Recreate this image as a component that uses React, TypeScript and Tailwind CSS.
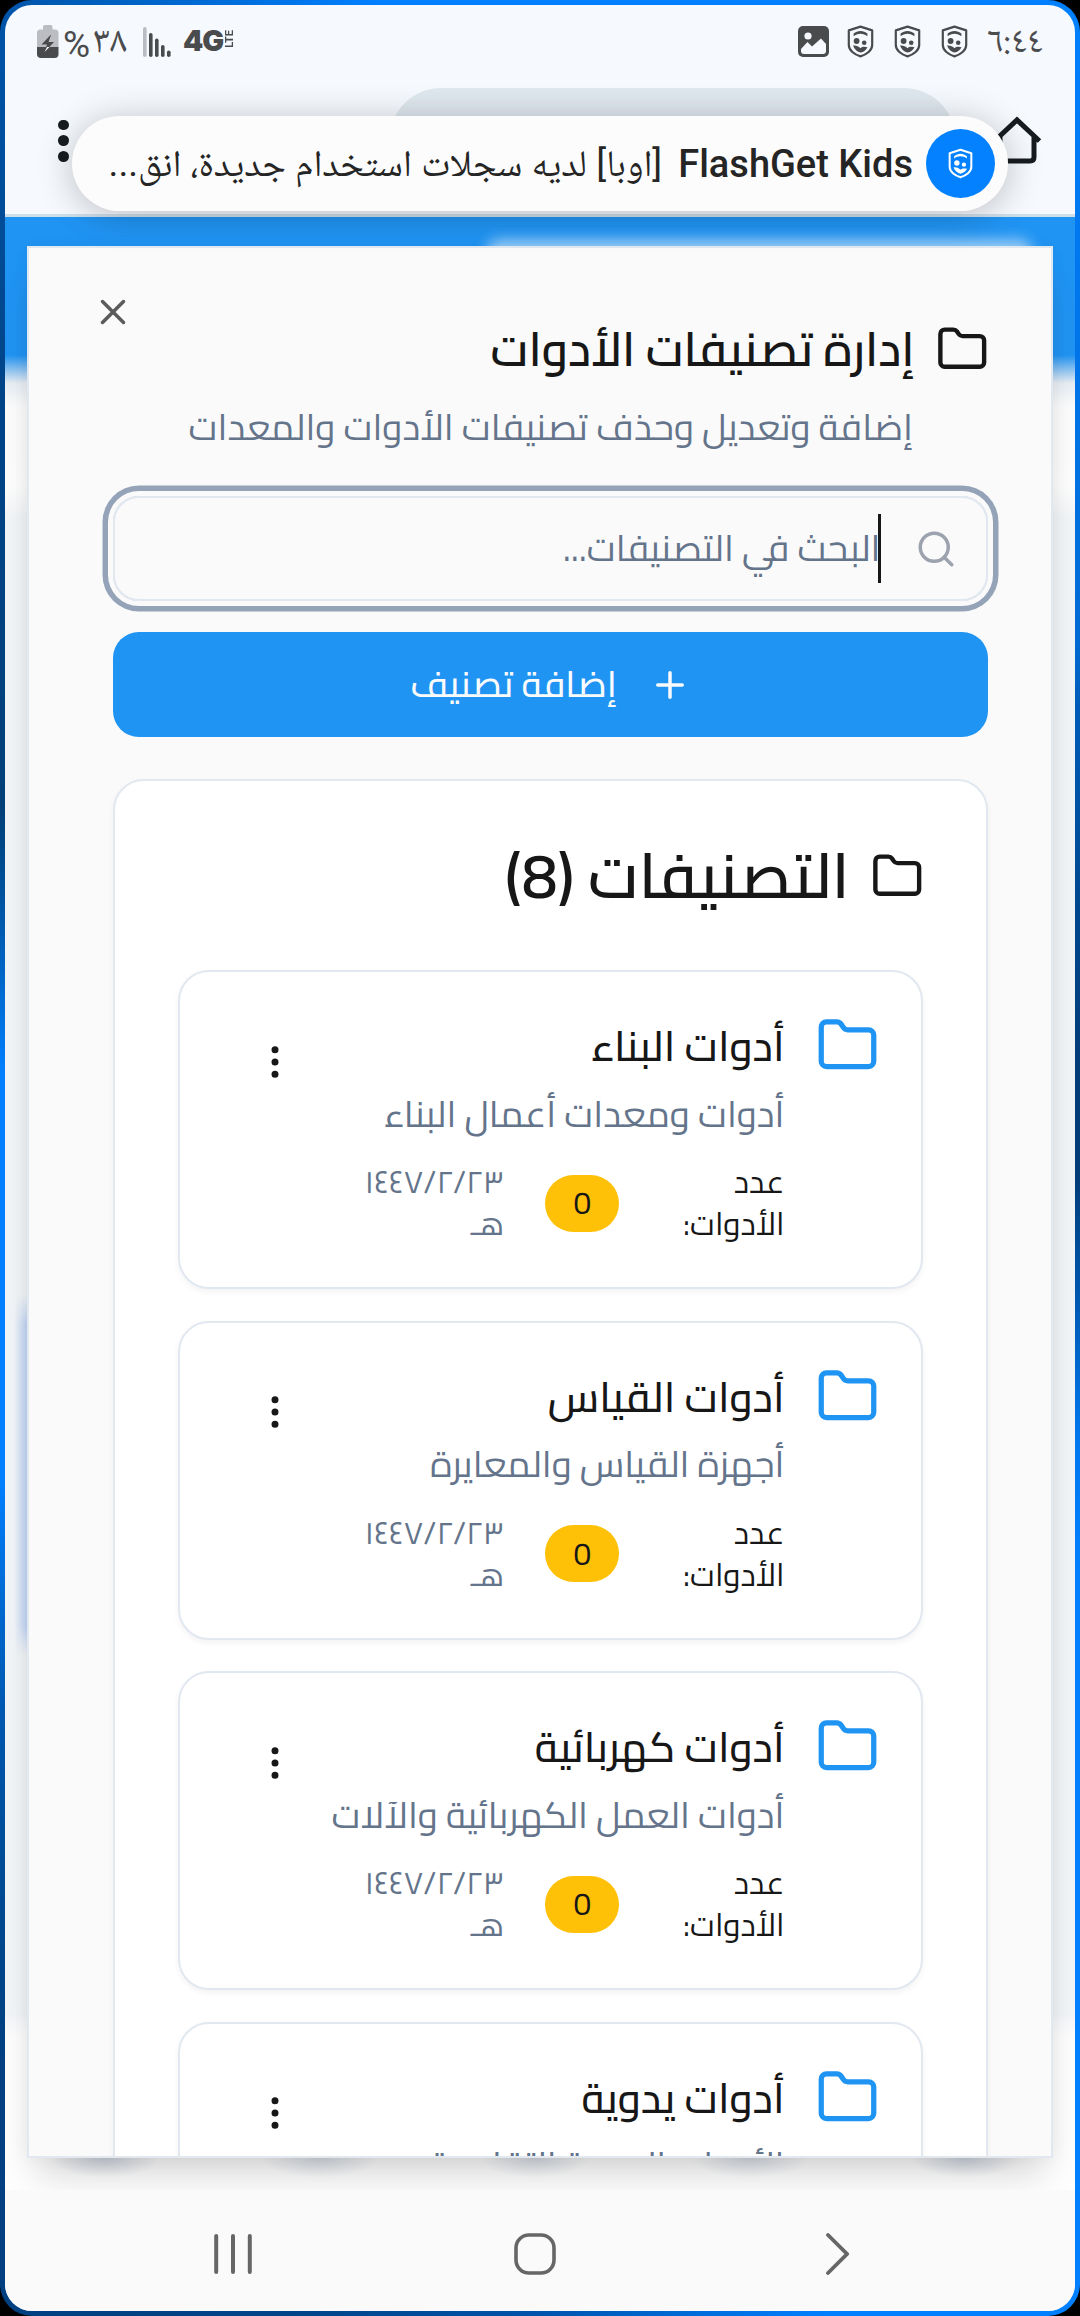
import React from 'react';
import { Folder, Search, Plus, X, MoreVertical } from 'lucide-react';

type Category = { name: string; description: string; count: number };

const categories: Category[] = [
  { name: 'أدوات البناء', description: 'أدوات ومعدات أعمال البناء', count: 0 },
  { name: 'أدوات القياس', description: 'أجهزة القياس والمعايرة', count: 0 },
  { name: 'أدوات كهربائية', description: 'أدوات العمل الكهربائية والآلات', count: 0 },
  { name: 'أدوات يدوية', description: 'الأدوات اليدوية التقليدية', count: 0 },
];

function Shield({ className }: { className: string }) {
  return (
    <svg viewBox="0 0 27 33" className={className} fill="none">
      <path
        d="M13.500 1.600 25.200 5.400V20c0 5.400-5.600 9.600-11.700 11.400C7.400 29.600 1.800 25.400 1.800 20V5.400Z"
        stroke="currentColor"
        strokeWidth="2.2"
        strokeLinejoin="round"
      />
      <path d="M6.600 11.200V8.600c2-1.600 4.200-2.600 6.900-2.600s4.900 1 6.900 2.600v2.600c-2-1.500-4.200-2.400-6.900-2.400s-4.900.9-6.900 2.400Z" fill="currentColor" />
      <circle cx="9.600" cy="16" r="2.900" fill="currentColor" />
      <circle cx="17.200" cy="17.800" r="2.300" fill="currentColor" />
      <path d="M6 20.600c2.600-.5 5.200.2 7.500 2.600 1.600-1.600 4.500-1.700 7-.9-1 2.600-4 4.800-7 5.300-3.200-.7-6.300-3.200-7.500-7Z" fill="currentColor" />
    </svg>
  );
}

function StatusBar() {
  return (
    <div dir="ltr" className="flex h-[83px] items-start justify-between pl-[32px] pr-[32px] pt-[20px] text-[#4a4b4d]">
      <div className="flex items-start">
        <svg viewBox="0 0 22 33" className="h-[33px] w-[22px]">
          <path d="M6 3.500V2Q6 0 8 0h5.500q2 0 2 2v2.500H18q3.500 0 3.500 3.500V22H0V8q0-3.500 3.500-3.500H6Z" fill="#bbbdc2" />
          <path d="M0 22h21.500v7q0 4-4 4H4q-4 0-4-4Z" fill="#4a4b4d" />
          <path d="m13.500 10-9 9.500h5.500L7.500 27l9.500-10h-5.500L14 10Z" fill="#4a4b4d" />
          <path d="m10 22-2.500 5 5-5Z" fill="#f6f9fe" />
        </svg>
        <span className="ml-[4px] w-[28px] font-['Roboto'] text-[37px] leading-[39px]">%</span>
        <span className="ml-[2px] w-[38px] whitespace-nowrap font-['Noto_Naskh_Arabic','Noto_Sans_Arabic',serif] text-[38px] leading-[38px]">٣٨</span>
        <svg viewBox="0 0 28 30" className="ml-[12px] mt-[1.500px] h-[30px] w-[28px]">
          <rect x="0" y="0" width="3.600" height="30" rx="1.800" fill="#bbbdc2" />
          <rect x="6" y="6" width="3.600" height="24" rx="1.800" fill="#4a4b4d" />
          <rect x="12" y="11.500" width="3.600" height="18.500" rx="1.800" fill="#4a4b4d" />
          <rect x="18" y="18" width="3.600" height="12" rx="1.800" fill="#4a4b4d" />
          <rect x="24" y="23.500" width="3.600" height="6.500" rx="1.800" fill="#4a4b4d" />
        </svg>
        <span className="ml-[12px] mt-[5px] w-[42px] whitespace-nowrap font-['Inter'] text-[29px] font-black leading-[22px] tracking-[-1px]">4G</span>
        <span className="mt-[5px] rotate-180 font-['Roboto'] text-[11px] font-bold leading-[10px] [writing-mode:vertical-rl]">LTE</span>
      </div>
      <div className="flex items-start">
        <svg viewBox="0 0 31 31" className="mt-px h-[31px] w-[31px]">
          <rect width="31" height="31" rx="5" fill="#4a4b4d" />
          <circle cx="10" cy="10" r="3.600" fill="#f6f9fe" />
          <path d="M3 23 9.500 16l4.500 4.500L23 12.500l5 5.500V25q0 3-3 3H6q-3 0-3-3Z" fill="#f6f9fe" />
        </svg>
        <Shield className="ml-[18px] h-[33px] w-[27px]" />
        <Shield className="ml-[20px] h-[33px] w-[27px]" />
        <Shield className="ml-[20px] h-[33px] w-[27px]" />
        <span className="ml-[19px] font-['Noto_Naskh_Arabic','Noto_Sans_Arabic',serif] text-[36px] leading-[39px]">٦:٤٤</span>
      </div>
    </div>
  );
}

function BrowserBar() {
  return (
    <div dir="ltr" className="flex h-[126px] items-start overflow-hidden">
      <div className="ml-[53px] mt-[31.500px] flex flex-col gap-[5px]">
        <span className="size-[10.700px] rounded-full bg-[#171c1f]" />
        <span className="size-[10.700px] rounded-full bg-[#171c1f]" />
        <span className="size-[10.700px] rounded-full bg-[#171c1f]" />
      </div>
      <div className="ml-[320px] h-[105px] w-[567px] shrink-0 rounded-full bg-[#dfe7ef]" />
      <svg viewBox="0 0 50 50" className="ml-[34px] mt-[28px] h-[50px] w-[54px] shrink-0" fill="none">
        <path d="M2.500 25 25 4l22.500 21M8 20v21q0 4 4 4h26q4 0 4-4V20" stroke="#171c1f" strokeWidth="5" />
      </svg>
    </div>
  );
}

function HeadsUp() {
  return (
    <div
      dir="rtl"
      className="absolute left-[67px] top-[111px] z-20 flex h-[95px] w-[936px] items-center rounded-full bg-[#fcfcfc] pr-[13px] text-[#252525] shadow-[0_4px_36px_rgba(0,0,0,0.24)]"
    >
      <span className="flex h-[69px] w-[69px] shrink-0 items-center justify-center rounded-full bg-[#0381fe] text-white">
        <Shield className="h-[31px] w-[25px]" />
      </span>
      <span className="mr-[13px] mt-[2px] shrink-0 whitespace-nowrap font-['Roboto'] text-[38px] font-medium" dir="ltr">FlashGet Kids</span>
      <span className="mr-[16px] whitespace-nowrap font-['Roboto','Noto_Naskh_Arabic','Noto_Sans_Arabic',serif] text-[37.400px]">
        [اوبا] لديه سجلات استخدام جديدة، انق...
      </span>
    </div>
  );
}

function CategoryCard({ category }: { category: Category }) {
  return (
    <div className="flex h-[319px] shrink-0 items-start rounded-[31px] border-2 border-[#e2e8f0] bg-white p-[42px] shadow-[0_3px_6px_rgba(0,0,0,0.05)]">
      <Folder className="size-[63px] shrink-0 text-[#2094f3]" />
      <div className="mr-[31.500px] w-[420px]">
        <div className="whitespace-nowrap text-[42px] font-medium leading-[63px]">{category.name}</div>
        <div className="mt-[10.500px] whitespace-nowrap text-[36.750px] leading-[52.500px] text-[#64748b]">{category.description}</div>
        <div className="mt-[21px] flex items-center gap-[42px] text-[31.500px] leading-[42px]">
          <span className="w-[124px]">
            عدد
            <br />
            الأدوات:
          </span>
          <span className="-mr-px flex h-[57px] w-[75px] translate-x-[-1px] items-center justify-center rounded-full bg-[#ffc107]">{category.count}</span>
          <span className="text-[#64748b]">
            ١٤٤٧/٢/٢٣
            <br />
            هـ
          </span>
        </div>
      </div>
      <MoreVertical className="mr-[69px] mt-[26.500px] size-[42px] shrink-0" />
    </div>
  );
}

function Dialog() {
  return (
    <div className="relative flex h-[1912px] w-[1026px] flex-col overflow-hidden border-2 border-[#e2e8f0] bg-[#fafafa] pl-[84px] pr-[63px] pt-[74.500px]">
      <X className="absolute left-[63px] top-[43px] size-[42px] text-[#5b5b5c]" />
      <div className="flex h-[52.500px] items-center gap-[21px]">
        <Folder className="size-[52.500px] shrink-0" />
        <h2 className="whitespace-nowrap text-[47.250px] font-semibold leading-[47.250px]">إدارة تصنيفات الأدوات</h2>
      </div>
      <p className="mr-[75px] mt-[26px] whitespace-nowrap text-[36.750px] leading-[52.500px] text-[#64748b]">
        إضافة وتعديل وحذف تصنيفات الأدوات والمعدات
      </p>
      <div className="mt-[42.500px] flex h-[105px] shrink-0 items-center rounded-[26px] border-2 border-[#e2e8f0] pr-[29px] shadow-[0_0_0_5px_#fafafa,0_0_0_10.500px_#94a3b8]">
        <Search className="size-[42px] shrink-0 text-[#9ca3af]" />
        <span className="relative mr-[34.500px] flex items-center text-[36.750px] leading-[52.500px] text-[#64748b]">
          البحث في التصنيفات...
          <span className="absolute right-0 h-[69px] w-[3px] bg-[#171717]" />
        </span>
      </div>
      <button className="mt-[31px] flex h-[105px] shrink-0 items-center justify-center gap-[32px] rounded-[26px] bg-[#2094f3] text-[36.750px] font-medium text-[#f8fafc]">
        <Plus className="size-[42px]" />
        <span className="whitespace-nowrap leading-[52.500px]">إضافة تصنيف</span>
      </button>
      <section className="mt-[42px] shrink-0 rounded-[31px] border-2 border-[#e2e8f0] bg-white px-[63px] pb-[63px] pt-[63px] shadow-[0_3px_6px_rgba(0,0,0,0.05)]">
        <div className="flex h-[63px] items-center gap-[21px]">
          <Folder className="mt-[2px] size-[52.500px] shrink-0" />
          <h3 className="whitespace-nowrap text-[63px] font-semibold leading-[63px]">التصنيفات (8)</h3>
        </div>
        <div className="mt-[63px] flex flex-col gap-[31.600px]">
          {categories.map((c) => (
            <CategoryCard key={c.name} category={c} />
          ))}
        </div>
      </section>
    </div>
  );
}

function NavBar() {
  return (
    <div dir="ltr" className="relative flex h-[121px] items-start bg-[#fafafa] pt-[43px] text-[#666]">
      <svg viewBox="0 0 38 42" className="ml-[209px] h-[42px] w-[38px]" fill="none" stroke="currentColor" strokeWidth="4" strokeLinecap="round">
        <path d="M2.200 3v36M19 3v36M35.800 3v36" />
      </svg>
      <svg viewBox="0 0 42 42" className="ml-[262px] h-[42px] w-[42px]" fill="none" stroke="currentColor" strokeWidth="3.600">
        <rect x="2" y="2" width="38" height="38" rx="13" />
      </svg>
      <svg viewBox="0 0 24 42" className="ml-[269px] h-[42px] w-[24px]" fill="none" stroke="currentColor" strokeWidth="3.800" strokeLinecap="round">
        <path d="m3 2 19 19L3 40" />
      </svg>
    </div>
  );
}

export default function App() {
  return (
    <div className="h-[2316px] w-[1080px] overflow-hidden bg-black">
      <div className="h-full w-full rounded-[32px] bg-[conic-gradient(#0080ff_0deg,#0080ff_25deg,#0078f0_30deg,#006ad4_46deg,#005cb8_50deg,#004890_64deg,#003c78_80deg,#003c78_92deg,#0060c0_108deg,#0078f0_118deg,#0080ff_128deg,#0080ff_166deg,#0054ac_180deg,#004488_192deg,#004080_205deg,#004080_211deg,#0058b0_224deg,#0080ff_239deg,#0080ff_279deg,#004078_303deg,#004488_325deg,#0054a8_335deg,#0080ff_352deg)] p-[5px]">
        <div dir="rtl" className="relative h-full w-full overflow-hidden rounded-[27px] bg-[#f6f9fe] font-['Cairo','Noto_Sans_Arabic',sans-serif] text-[#171717]">
          <StatusBar />
          <BrowserBar />
          <div className="relative h-[1976px] overflow-hidden border-t-[3px] border-[#cfdfea] bg-[linear-gradient(#2094f3_0px,#2094f3_138px,#8fc4f2_153px,#e8eef4_166px,#fdfdfd_190px,#fefefe_270px,#f3f6f9_300px,#f3f6f9_1796px,#fefefe_1820px)] pt-[29px]">
            <div className="pointer-events-none absolute left-[482px] top-[23px] h-[30px] w-[545px] rounded-[12px] bg-white/60 blur-[7px]" />
            <div dir="ltr" className="relative mx-auto w-[1026px] shadow-[0_24px_36px_-10px_rgba(0,0,0,0.18),0_0_16px_rgba(0,0,0,0.04)]">
              <div dir="rtl">
                <Dialog />
              </div>
            </div>
          </div>
          <NavBar />
          <div className="pointer-events-none absolute left-[9px] top-[1290px] h-[360px] w-[13px] bg-gradient-to-r from-transparent to-[#5b8fe6]/35 [mask-image:linear-gradient(transparent,black_8%,black_92%,transparent)]" />
          <div className="pointer-events-none absolute left-[45px] top-[2153px] flex h-[20px] w-[970px] justify-between">
            <span className="w-[110px] bg-[radial-gradient(ellipse_at_top,#64748b55,transparent_70%)]" />
            <span className="w-[120px] bg-[radial-gradient(ellipse_at_top,#64748b44,transparent_70%)]" />
            <span className="w-[110px] bg-[radial-gradient(ellipse_at_top,#64748b44,transparent_70%)]" />
            <span className="w-[120px] bg-[radial-gradient(ellipse_at_top,#64748b44,transparent_70%)]" />
            <span className="w-[110px] bg-[radial-gradient(ellipse_at_top,#64748b55,transparent_70%)]" />
          </div>
          <HeadsUp />
        </div>
      </div>
    </div>
  );
}
